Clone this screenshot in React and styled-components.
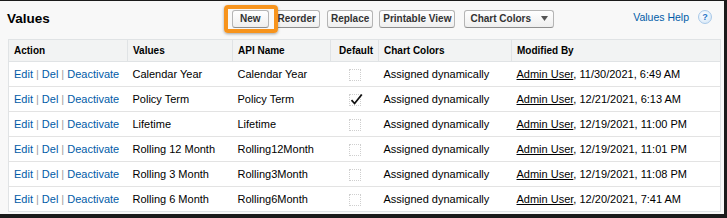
import React from "react"
import styled, { createGlobalStyle } from "styled-components"

const GlobalStyle = createGlobalStyle`
  html, body {
    margin: 0;
    padding: 0;
    background: #fff;
  }
  body {
    font-family: "Liberation Sans", Arial, sans-serif;
  }
`

const Frame = styled.div`
  box-sizing: border-box;
  width: 727px;
  height: 218px;
  background: #f8f8f8;
  border-top: 1px solid #1b1b1b;
  border-right: 3px solid #1b1b1b;
  border-bottom: 4px solid #1b1b1b;
  padding: 0 3px 0 8px;
  overflow: hidden;
`

const Toolbar = styled.div`
  display: flex;
  align-items: center;
  height: 35px;
  margin-left: -8px;
`

const Title = styled.h2`
  box-sizing: border-box;
  width: 224px;
  margin: 0;
  padding-left: 7px;
  font-size: 13.5px;
  font-weight: bold;
  color: #000;
`

const Buttons = styled.div`
  display: flex;
  align-items: center;
`

const Highlight = styled.span`
  position: relative;
  z-index: 2;
  display: inline-flex;
  padding: 1px 5px 1px 4px;
  border: 4px solid #f7941d;
  border-radius: 4px;
  box-shadow: 0 1px 3px rgba(0, 0, 0, 0.35);
`

const Button = styled.button`
  box-sizing: border-box;
  height: 18px;
  margin: 0 0 0 ${p => p.$gap ?? 6}px;
  padding: 0 ${p => p.$pad ?? 3}px;
  display: inline-flex;
  align-items: center;
  gap: 10px;
  font-family: "Liberation Sans", Arial, sans-serif;
  font-size: 10px;
  font-weight: bold;
  color: #333;
  background: linear-gradient(#ffffff, #efefef);
  border: 1px solid #b5b5b5;
  border-bottom-color: #8f8f8f;
  border-radius: 3px;
  cursor: pointer;
`

const Help = styled.div`
  margin-left: auto;
  margin-top: -3px;
  padding-right: 9px;
  display: flex;
  align-items: center;
  gap: 9px;
`

const HelpLink = styled.a`
  font-size: 10.5px;
  color: #015ba7;
  text-decoration: none;
`

const HelpIcon = styled.span`
  box-sizing: border-box;
  width: 14px;
  height: 14px;
  border-radius: 50%;
  border: 1px solid #a9c9e8;
  background: radial-gradient(circle at 40% 35%, #ffffff, #cfe3f6);
  color: #2a74c5;
  font-size: 9px;
  font-weight: bold;
  display: flex;
  align-items: center;
  justify-content: center;
`

const Table = styled.table`
  margin-top: 3px;
  width: 713px;
  table-layout: fixed;
  border-collapse: collapse;
  background: #fff;
  border: 1px solid #e0e3e5;
`

const Th = styled.th`
  height: 21px;
  padding: 0 5px;
  background: #f2f3f3;
  border-bottom: 1px solid #e0e3e5;
  border-left: 1px solid #e0e3e5;
  font-size: 10px;
  font-weight: bold;
  color: #000;
  text-align: ${p => p.$align || "left"};
  &:first-child {
    border-left: none;
  }
`

const Td = styled.td`
  height: 24px;
  padding: 0 5px;
  border-bottom: 1px solid #e3e3e3;
  font-size: 11px;
  color: #000;
  white-space: nowrap;
  text-align: ${p => p.$align || "left"};
  tr:last-child & {
    border-bottom: none;
  }
`

const ActionLink = styled.a`
  color: #015ba7;
  text-decoration: none;
`

const Sep = styled.span`
  color: #a0a0a0;
  margin: 0 3px;
`

const UserLink = styled.a`
  color: #000;
  text-decoration: underline;
`

const Check = styled.span`
  box-sizing: border-box;
  display: inline-block;
  position: relative;
  width: 12px;
  height: 12px;
  border: 1px dotted #cfcfcf;
  vertical-align: middle;
  svg {
    position: absolute;
    left: 0;
    top: -2px;
  }
`

const rows = [
  ["Calendar Year", "Calendar Year", false, "11/30/2021, 6:49 AM"],
  ["Policy Term", "Policy Term", true, "12/21/2021, 6:13 AM"],
  ["Lifetime", "Lifetime", false, "12/19/2021, 11:00 PM"],
  ["Rolling 12 Month", "Rolling12Month", false, "12/19/2021, 11:01 PM"],
  ["Rolling 3 Month", "Rolling3Month", false, "12/19/2021, 11:08 PM"],
  ["Rolling 6 Month", "Rolling6Month", false, "12/20/2021, 7:41 AM"],
]

function Checkbox({ checked }) {
  return (
    <Check>
      {checked && (
        <svg width="13" height="13" viewBox="0 0 13 13">
          <path d="M1.5 7.2 L4.6 10.5 L11.8 1.5" fill="none" stroke="#111" strokeWidth="1.8" />
        </svg>
      )}
    </Check>
  )
}

export default function App() {
  return (
    <Frame>
      <GlobalStyle />
      <Toolbar>
        <Title>Values</Title>
        <Buttons>
          <Highlight>
            <Button $gap={0} $pad={7}>New</Button>
          </Highlight>
          <Button $gap={-4}>Reorder</Button>
          <Button $gap={7}>Replace</Button>
          <Button>Printable View</Button>
          <Button $gap={9} $pad={5}>
            Chart Colors
            <svg width="7" height="5" viewBox="0 0 7 5">
              <path d="M0 0 H7 L3.5 5 Z" fill="#555" />
            </svg>
          </Button>
        </Buttons>
        <Help>
          <HelpLink href="#">Values Help</HelpLink>
          <HelpIcon>?</HelpIcon>
        </Help>
      </Toolbar>
      <Table>
        <colgroup>
          <col style={{ width: 119 }} />
          <col style={{ width: 105 }} />
          <col style={{ width: 98 }} />
          <col style={{ width: 48 }} />
          <col style={{ width: 133 }} />
          <col />
        </colgroup>
        <thead>
          <tr>
            <Th>Action</Th>
            <Th>Values</Th>
            <Th>API Name</Th>
            <Th $align="right">Default</Th>
            <Th>Chart Colors</Th>
            <Th>Modified By</Th>
          </tr>
        </thead>
        <tbody>
          {rows.map(([label, api, def, when]) => (
            <tr key={api}>
              <Td>
                <ActionLink href="#">Edit</ActionLink>
                <Sep>|</Sep>
                <ActionLink href="#">Del</ActionLink>
                <Sep>|</Sep>
                <ActionLink href="#">Deactivate</ActionLink>
              </Td>
              <Td>{label}</Td>
              <Td>{api}</Td>
              <Td $align="center"><Checkbox checked={def} /></Td>
              <Td>Assigned dynamically</Td>
              <Td>
                <UserLink href="#">Admin User</UserLink>, {when}
              </Td>
            </tr>
          ))}
        </tbody>
      </Table>
    </Frame>
  )
}
